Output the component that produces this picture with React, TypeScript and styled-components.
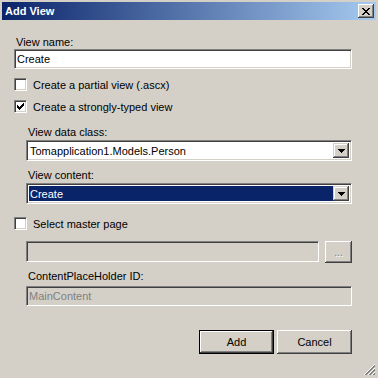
import React from 'react';
import styled, { createGlobalStyle } from 'styled-components';

const GlobalStyle = createGlobalStyle`
  html, body {
    margin: 0;
    padding: 0;
  }
  body {
    background: #d4d0c8;
    font-family: Tahoma, "Liberation Sans", Arial, sans-serif;
    font-size: 11px;
    color: #000;
  }
`;

const Window = styled.div`
  position: relative;
  width: 378px;
  height: 378px;
  box-sizing: border-box;
  padding: 2px;
  background: #d4d0c8;
  display: flex;
  flex-direction: column;
`;

const TitleBar = styled.div`
  height: 18px;
  flex-shrink: 0;
  display: flex;
  align-items: center;
  justify-content: space-between;
  padding: 0 2px 0 3px;
  background: linear-gradient(to right, #0a246a, #a6caf0);
`;

const Title = styled.span`
  color: #fff;
  font-weight: bold;
  font-size: 11px;
`;

const CloseButton = styled.div`
  width: 16px;
  height: 14px;
  box-sizing: border-box;
  display: flex;
  align-items: center;
  justify-content: center;
  background: #d4d0c8;
  box-shadow: inset -1px -1px #404040, inset 1px 1px #fff, inset -2px -2px #808080, inset 2px 2px #d4d0c8;
`;

const Body = styled.div`
  display: flex;
  flex-direction: column;
  padding: 16px 24px 0 12px;
`;

const Indent = styled.div`
  display: flex;
  flex-direction: column;
  padding-left: 12px;
`;

const Label = styled.div<{ $mt?: number }>`
  height: 13px;
  line-height: 13px;
  margin-top: ${(p) => p.$mt ?? 0}px;
  padding-left: 2px;
  white-space: nowrap;
`;

const Field = styled.div<{ $mt?: number; $h?: number; $disabled?: boolean }>`
  flex: 1 0 auto;
  height: ${(p) => p.$h ?? 20}px;
  margin-top: ${(p) => p.$mt ?? 0}px;
  box-sizing: border-box;
  border: 1px solid;
  border-color: #808080 #fff #fff #808080;
  box-shadow: inset 1px 1px #404040, inset -1px -1px #d4d0c8;
  background: ${(p) => (p.$disabled ? '#d4d0c8' : '#fff')};
  color: ${(p) => (p.$disabled ? '#808080' : '#000')};
  display: flex;
  align-items: center;
  padding: 0 2px;
  white-space: nowrap;
`;

const SelectBox = styled.div<{ $mt?: number }>`
  flex-shrink: 0;
  height: 21px;
  margin-top: ${(p) => p.$mt ?? 0}px;
  box-sizing: border-box;
  border: 1px solid;
  border-color: #808080 #fff #fff #808080;
  box-shadow: inset 1px 1px #404040, inset -1px -1px #d4d0c8;
  background: #fff;
  display: flex;
  padding: 2px;
`;

const SelectValue = styled.div<{ $selected?: boolean }>`
  flex: 1;
  display: flex;
  align-items: center;
  padding-left: 1px;
  background: ${(p) => (p.$selected ? '#0a246a' : 'transparent')};
  color: ${(p) => (p.$selected ? '#fff' : '#000')};
  white-space: nowrap;
`;

const DropButton = styled.div`
  width: 16px;
  box-sizing: border-box;
  display: flex;
  align-items: center;
  justify-content: center;
  background: #d4d0c8;
  box-shadow: inset -1px -1px #404040, inset 1px 1px #d4d0c8, inset -2px -2px #808080, inset 2px 2px #fff;
`;

const CheckRow = styled.label<{ $mt?: number }>`
  display: flex;
  align-items: center;
  gap: 6px;
  height: 13px;
  flex-shrink: 0;
  margin-top: ${(p) => p.$mt ?? 0}px;
  white-space: nowrap;
`;

const CheckBox = styled.span`
  width: 13px;
  height: 13px;
  box-sizing: border-box;
  border: 1px solid;
  border-color: #808080 #fff #fff #808080;
  box-shadow: inset 1px 1px #404040, inset -1px -1px #d4d0c8;
  background: #fff;
  display: flex;
  align-items: center;
  justify-content: center;
`;

const Row = styled.div<{ $mt?: number }>`
  display: flex;
  align-items: flex-start;
  gap: 6px;
  margin-top: ${(p) => p.$mt ?? 0}px;
`;

const BrowseButton = styled.div`
  width: 27px;
  height: 22px;
  flex-shrink: 0;
  box-sizing: border-box;
  display: flex;
  align-items: flex-end;
  justify-content: center;
  padding-bottom: 5px;
  color: #808080;
  text-shadow: 1px 1px #fff;
  font-size: 10px;
  line-height: 10px;
  background: #d4d0c8;
  box-shadow: inset -1px -1px #404040, inset 1px 1px #fff, inset -2px -2px #808080, inset 2px 2px #d4d0c8;
`;

const ButtonRow = styled.div`
  display: flex;
  justify-content: flex-end;
  gap: 3px;
  margin-top: 24px;
`;

const PushButton = styled.div<{ $default?: boolean }>`
  width: 75px;
  height: 24px;
  box-sizing: border-box;
  display: flex;
  align-items: center;
  justify-content: center;
  background: #d4d0c8;
  border: ${(p) => (p.$default ? '1px solid #000' : 'none')};
  box-shadow: inset -1px -1px #404040, inset 1px 1px #fff, inset -2px -2px #808080, inset 2px 2px #d4d0c8;
`;

const Grip = styled.svg`
  position: absolute;
  right: 2px;
  bottom: 2px;
`;

const Check = () => (
  <svg width="7" height="7" viewBox="0 0 7 7" shapeRendering="crispEdges">
    <path
      d="M6 0h1v3h-1z M5 1h1v3h-1z M4 2h1v3h-1z M3 3h1v3h-1z M2 4h1v3h-1z M1 3h1v3h-1z M0 2h1v3h-1z"
      fill="#000"
    />
  </svg>
);

const Arrow = () => (
  <svg width="7" height="4" viewBox="0 0 7 4" shapeRendering="crispEdges">
    <path d="M0 0h7v1h-7z M1 1h5v1h-5z M2 2h3v1h-3z M3 3h1v1h-1z" fill="#000" />
  </svg>
);

const CloseIcon = () => (
  <svg width="8" height="7" viewBox="0 0 8 7" shapeRendering="crispEdges">
    <path
      d="M0 0h2v1h-2z M6 0h2v1h-2z M1 1h2v1h-2z M5 1h2v1h-2z M2 2h4v1h-4z M3 3h2v1h-2z M2 4h4v1h-4z M1 5h2v1h-2z M5 5h2v1h-2z M0 6h2v1h-2z M6 6h2v1h-2z"
      fill="#000"
    />
  </svg>
);

const App: React.FC = () => {
  return (
    <>
      <GlobalStyle />
      <Window>
        <TitleBar>
          <Title>Add View</Title>
          <CloseButton>
            <CloseIcon />
          </CloseButton>
        </TitleBar>

        <Body>
          <Label>View name:</Label>
          <Field>Create</Field>

          <CheckRow $mt={9}>
            <CheckBox />
            Create a partial view (.ascx)
          </CheckRow>
          <CheckRow $mt={9}>
            <CheckBox>
              <Check />
            </CheckBox>
            Create a strongly-typed view
          </CheckRow>

          <Indent>
            <Label $mt={13}>View data class:</Label>
            <SelectBox $mt={1}>
              <SelectValue>Tomapplication1.Models.Person</SelectValue>
              <DropButton>
                <Arrow />
              </DropButton>
            </SelectBox>
            <Label $mt={8}>View content:</Label>
            <SelectBox $mt={1}>
              <SelectValue $selected>Create</SelectValue>
              <DropButton>
                <Arrow />
              </DropButton>
            </SelectBox>
          </Indent>

          <CheckRow $mt={13}>
            <CheckBox />
            Select master page
          </CheckRow>

          <Indent>
            <Row $mt={11}>
              <Field $h={21} $disabled />
              <BrowseButton>...</BrowseButton>
            </Row>
            <Label $mt={7}>ContentPlaceHolder ID:</Label>
            <Field $mt={3} $disabled>
              MainContent
            </Field>
          </Indent>

          <ButtonRow>
            <PushButton $default>Add</PushButton>
            <PushButton>Cancel</PushButton>
          </ButtonRow>
        </Body>

        <Grip width="12" height="12" viewBox="0 0 12 12" shapeRendering="crispEdges">
          <path d="M11 0L0 11 M11 4L4 11 M11 8L8 11" stroke="#fff" strokeWidth="1" />
          <path d="M11 1L1 11 M11 2L2 11 M11 5L5 11 M11 6L6 11 M11 9L9 11 M11 10L10 11" stroke="#808080" strokeWidth="1" />
        </Grip>
      </Window>
    </>
  );
};

export default App;
